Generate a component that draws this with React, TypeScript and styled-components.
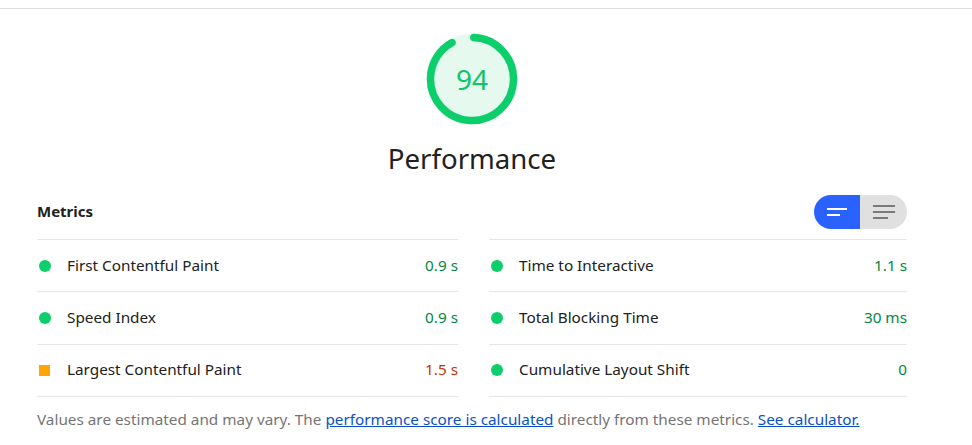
import React from "react";
import styled, { createGlobalStyle } from "styled-components";

const GlobalStyle = createGlobalStyle`
  html, body {
    margin: 0;
    padding: 0;
    background: #ffffff;
  }
  body {
    font-family: "Noto Sans", "Open Sans", sans-serif;
    color: #212121;
  }
`;

const Page = styled.div`
  margin-top: 8px;
  border-top: 1px solid #dadce0;
  padding: 24px 65px 0 37px;
`;

const Section = styled.section`
  width: 870px;
  display: flex;
  flex-direction: column;
`;

const GaugeBlock = styled.div`
  display: flex;
  flex-direction: column;
  align-items: center;
`;

const GaugeWrap = styled.div`
  position: relative;
  width: 92px;
  height: 92px;
`;

const GaugeScore = styled.div`
  position: absolute;
  inset: 0;
  display: flex;
  align-items: center;
  justify-content: center;
  font-size: 28px;
  line-height: 1;
  color: #10c469;
`;

const GaugeTitle = styled.div`
  margin-top: 15px;
  font-size: 27.6px;
  line-height: 36px;
  color: #212121;
`;

const Header = styled.div`
  margin-top: 19px;
  display: flex;
  align-items: center;
  justify-content: space-between;
  height: 34px;
`;

const HeaderTitle = styled.div`
  font-size: 15px;
  font-weight: 700;
  color: #212121;
  padding-bottom: 2px;
`;

const Toggle = styled.div`
  display: flex;
  height: 34px;
  border-radius: 17px;
  overflow: hidden;
`;

const ToggleButton = styled.button<{ $active: boolean; $w: number }>`
  border: 0;
  padding: 0;
  margin: 0;
  width: ${(p) => p.$w}px;
  height: 34px;
  display: flex;
  align-items: center;
  justify-content: center;
  background: ${(p) => (p.$active ? "#2962ff" : "#e0e0e0")};
  cursor: pointer;
`;

const MetricGrid = styled.div`
  margin-top: 10px;
  display: grid;
  grid-template-columns: 421px 418px;
  column-gap: 31px;
`;

const Column = styled.div`
  display: flex;
  flex-direction: column;
  border-bottom: 1px solid #e6e6e6;
`;

const MetricRow = styled.div`
  box-sizing: border-box;
  height: 52.3px;
  display: flex;
  align-items: center;
  border-top: 1px solid #e6e6e6;
  padding: 0 0 2px 2px;
  font-size: 15.3px;
`;

const RatingIcon = styled.span<{ $rating: "pass" | "average" }>`
  flex: none;
  width: ${(p) => (p.$rating === "pass" ? 12 : 11)}px;
  height: ${(p) => (p.$rating === "pass" ? 12 : 11)}px;
  border-radius: ${(p) => (p.$rating === "pass" ? "50%" : "0")};
  background: ${(p) => (p.$rating === "pass" ? "#0cce6b" : "#ffa400")};
  margin-right: ${(p) => (p.$rating === "pass" ? 16 : 17)}px;
  margin-top: 2px;
`;

const MetricTitle = styled.span`
  color: #212121;
`;

const MetricValue = styled.span<{ $rating: "pass" | "average" }>`
  margin-left: auto;
  color: ${(p) => (p.$rating === "pass" ? "#018642" : "#c33300")};
`;

const Disclaimer = styled.p`
  margin: 12px 0 0;
  font-size: 15.3px;
  line-height: 20px;
  color: #757575;
`;

const Link = styled.a`
  color: #0c50c7;
  text-decoration: underline;
`;

type Rating = "pass" | "average";
type Metric = { title: string; value: string; rating: Rating };

const left: Metric[] = [
  { title: "First Contentful Paint", value: "0.9 s", rating: "pass" },
  { title: "Speed Index", value: "0.9 s", rating: "pass" },
  { title: "Largest Contentful Paint", value: "1.5 s", rating: "average" },
];

const right: Metric[] = [
  { title: "Time to Interactive", value: "1.1 s", rating: "pass" },
  { title: "Total Blocking Time", value: "30 ms", rating: "pass" },
  { title: "Cumulative Layout Shift", value: "0", rating: "pass" },
];

const R = 41.5;
const CIRC = 2 * Math.PI * R;
const ARC = (328 / 360) * CIRC;

function Gauge({ score }: { score: number }) {
  return (
    <GaugeWrap>
      <svg width="92" height="92" viewBox="0 0 92 92">
        <circle cx="46" cy="46" r={R} fill="#e6f9ef" stroke="#e6f9ef" strokeWidth="7.5" />
        <circle
          cx="46"
          cy="46"
          r={R}
          fill="none"
          stroke="#0cce6b"
          strokeWidth="7.5"
          strokeLinecap="round"
          strokeDasharray={`${ARC} ${CIRC}`}
          transform="rotate(-87.4 46 46)"
        />
      </svg>
      <GaugeScore>{score}</GaugeScore>
    </GaugeWrap>
  );
}

function MetricItem({ m }: { m: Metric }) {
  return (
    <MetricRow>
      <RatingIcon $rating={m.rating} />
      <MetricTitle>{m.title}</MetricTitle>
      <MetricValue $rating={m.rating}>{m.value}</MetricValue>
    </MetricRow>
  );
}

export default function App() {
  return (
    <>
      <GlobalStyle />
      <Page>
        <Section>
          <GaugeBlock>
            <Gauge score={94} />
            <GaugeTitle>Performance</GaugeTitle>
          </GaugeBlock>
          <Header>
            <HeaderTitle>Metrics</HeaderTitle>
            <Toggle>
              <ToggleButton $active $w={46} aria-label="Show compact">
                <svg width="20" height="8" viewBox="0 0 20 8">
                  <rect x="0" y="0" width="20" height="2" fill="#ffffff" />
                  <rect x="0" y="6" width="13" height="2" fill="#ffffff" />
                </svg>
              </ToggleButton>
              <ToggleButton $active={false} $w={47} aria-label="Show descriptions">
                <svg width="22" height="14" viewBox="0 0 22 14">
                  <rect x="0" y="0" width="22" height="2" fill="#7a7a7a" />
                  <rect x="0" y="6" width="22" height="2" fill="#7a7a7a" />
                  <rect x="0" y="12" width="15" height="2" fill="#7a7a7a" />
                </svg>
              </ToggleButton>
            </Toggle>
          </Header>
          <MetricGrid>
            <Column>
              {left.map((m) => (
                <MetricItem key={m.title} m={m} />
              ))}
            </Column>
            <Column>
              {right.map((m) => (
                <MetricItem key={m.title} m={m} />
              ))}
            </Column>
          </MetricGrid>
          <Disclaimer>
            Values are estimated and may vary. The <Link href="#">performance score is calculated</Link> directly
            from these metrics. <Link href="#">See calculator.</Link>
          </Disclaimer>
        </Section>
      </Page>
    </>
  );
}
